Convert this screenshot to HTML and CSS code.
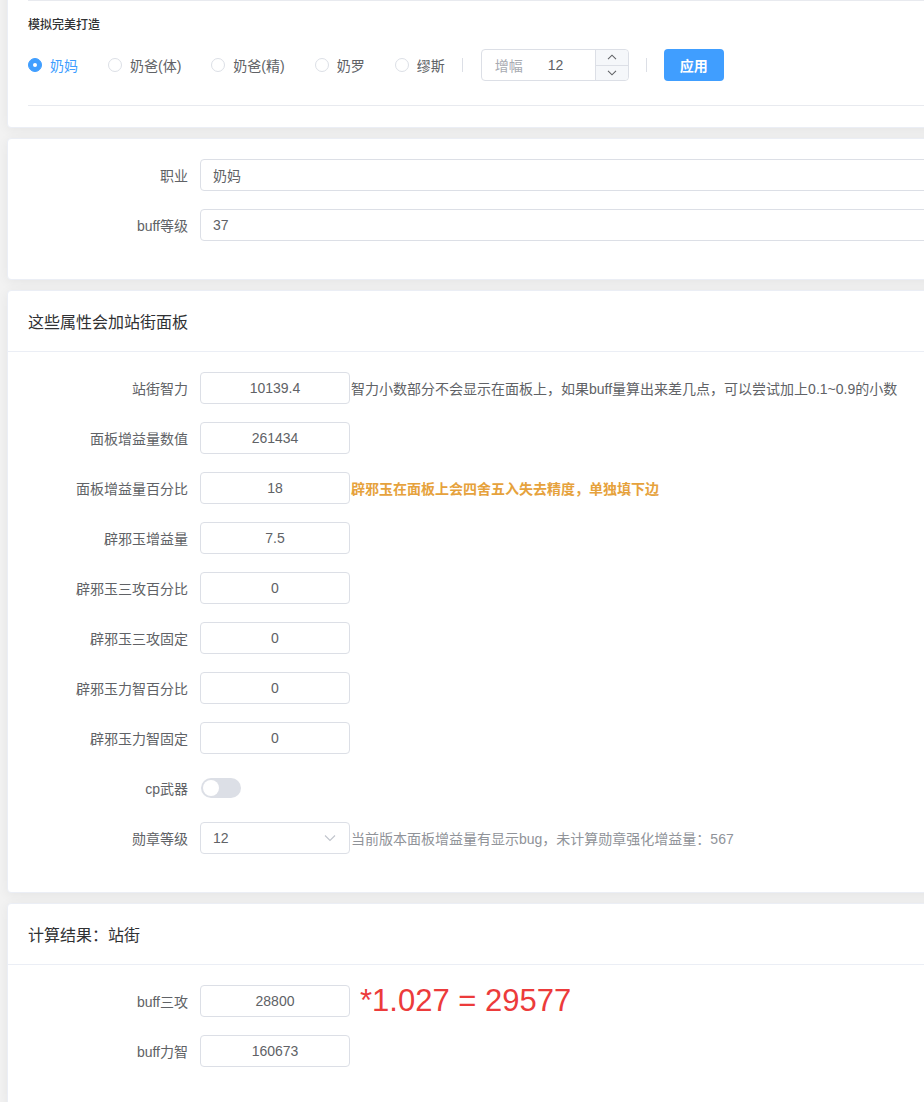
FILE: index.html
```html
<!DOCTYPE html>
<html lang="zh-CN">
<head>
<meta charset="utf-8">
<title>模拟完美打造</title>
<link rel="stylesheet" href="styles.css">
</head>
<body>
<div class="page">
  <div class="card card-top">
    <div class="card-body top-body">
      <div class="divider"></div>
      <div class="sim-title">模拟完美打造</div>
      <div class="sim-row">
        <div class="radio-group">
          <label class="radio checked"><span class="radio-dot"></span><span class="radio-text">奶妈</span></label>
          <label class="radio"><span class="radio-dot"></span><span class="radio-text">奶爸(体)</span></label>
          <label class="radio"><span class="radio-dot"></span><span class="radio-text">奶爸(精)</span></label>
          <label class="radio"><span class="radio-dot"></span><span class="radio-text">奶罗</span></label>
          <label class="radio last"><span class="radio-dot"></span><span class="radio-text">缪斯</span></label>
        </div>
        <span class="vdivider"></span>
        <div class="num-input">
          <span class="num-prefix">增幅</span>
          <span class="num-value">12</span>
          <span class="num-controls">
            <span class="num-btn num-up"><svg width="10" height="6" viewBox="0 0 10 6"><path d="M1 5.2 L5 1.2 L9 5.2" fill="none" stroke="#606266" stroke-width="1.1"/></svg></span>
            <span class="num-btn"><svg width="10" height="6" viewBox="0 0 10 6"><path d="M1 0.8 L5 4.8 L9 0.8" fill="none" stroke="#606266" stroke-width="1.1"/></svg></span>
          </span>
        </div>
        <span class="vdivider"></span>
        <button class="btn-primary">应用</button>
      </div>
      <div class="divider bottom-divider"></div>
    </div>
  </div>

  <div class="card">
    <div class="card-body">
      <div class="form-row">
        <div class="form-label">职业</div>
        <div class="input wide">奶妈</div>
      </div>
      <div class="form-row">
        <div class="form-label">buff等级</div>
        <div class="input wide">37</div>
      </div>
    </div>
  </div>

  <div class="card">
    <div class="card-header">这些属性会加站街面板</div>
    <div class="card-body">
      <div class="form-row">
        <div class="form-label">站街智力</div>
        <div class="input num">10139.4</div>
        <span class="hint">智力小数部分不会显示在面板上，如果buff量算出来差几点，可以尝试加上0.1~0.9的小数</span>
      </div>
      <div class="form-row">
        <div class="form-label">面板增益量数值</div>
        <div class="input num">261434</div>
      </div>
      <div class="form-row">
        <div class="form-label">面板增益量百分比</div>
        <div class="input num">18</div>
        <span class="hint warn">辟邪玉在面板上会四舍五入失去精度，单独填下边</span>
      </div>
      <div class="form-row">
        <div class="form-label">辟邪玉增益量</div>
        <div class="input num">7.5</div>
      </div>
      <div class="form-row">
        <div class="form-label">辟邪玉三攻百分比</div>
        <div class="input num">0</div>
      </div>
      <div class="form-row">
        <div class="form-label">辟邪玉三攻固定</div>
        <div class="input num">0</div>
      </div>
      <div class="form-row">
        <div class="form-label">辟邪玉力智百分比</div>
        <div class="input num">0</div>
      </div>
      <div class="form-row">
        <div class="form-label">辟邪玉力智固定</div>
        <div class="input num">0</div>
      </div>
      <div class="form-row">
        <div class="form-label">cp武器</div>
        <span class="switch"><span class="switch-knob"></span></span>
      </div>
      <div class="form-row">
        <div class="form-label">勋章等级</div>
        <div class="input select">
          <span>12</span>
          <svg class="select-arrow" width="12" height="8" viewBox="0 0 12 8"><path d="M1 1.5 L6 6.5 L11 1.5" fill="none" stroke="#c0c4cc" stroke-width="1.1"/></svg>
        </div>
        <span class="hint muted">当前版本面板增益量有显示bug，未计算勋章强化增益量：567</span>
      </div>
    </div>
  </div>

  <div class="card">
    <div class="card-header">计算结果：站街</div>
    <div class="card-body">
      <div class="form-row">
        <div class="form-label">buff三攻</div>
        <div class="input num">28800</div>
        <span class="result">*1.027 = 29577</span>
      </div>
      <div class="form-row">
        <div class="form-label">buff力智</div>
        <div class="input num">160673</div>
      </div>
    </div>
  </div>
</div>
</body>
</html>
```

FILE: styles.css
```css
html, body {
  margin: 0;
  padding: 0;
  overflow: hidden;
  background: #f2f2f2;
}
body {
  font-family: "Liberation Sans", "Noto Sans CJK SC", sans-serif;
  font-size: 14px;
  color: #606266;
}
.page {
  padding-left: 7px;
  width: 1100px;
  display: flex;
  flex-direction: column;
  gap: 10px;
}
.card {
  background: #fff;
  border: 1px solid #ebeef5;
  border-radius: 4px;
  box-shadow: 0 2px 12px 0 rgba(0, 0, 0, 0.06);
}
.card-top {
  margin-top: -20px;
}
.card-body {
  padding: 20px 20px 20px 20px;
}
.top-body {
  padding: 19px 20px 21px 20px;
}
.divider {
  height: 1px;
  background: #e8eaef;
}
.bottom-divider {
  margin-top: 24px;
}
.sim-title {
  margin-top: 14px;
  height: 20px;
  line-height: 20px;
  font-size: 12px;
  font-weight: 500;
  color: #303133;
}
.sim-row {
  margin-top: 14px;
  height: 32px;
  display: flex;
  align-items: center;
}
.radio-group {
  display: flex;
  align-items: center;
}
.radio {
  display: flex;
  align-items: center;
  margin-right: 30px;
  color: #606266;
  font-size: 14px;
}
.radio.last {
  margin-right: 0;
}
.radio-dot {
  width: 12px;
  height: 12px;
  border: 1px solid #dcdfe6;
  border-radius: 50%;
  background: #fff;
  margin-right: 8px;
  position: relative;
}
.radio.checked .radio-dot {
  background: #409eff;
  border-color: #409eff;
}
.radio.checked .radio-dot::after {
  content: "";
  position: absolute;
  left: 4px;
  top: 4px;
  width: 4px;
  height: 4px;
  border-radius: 50%;
  background: #fff;
}
.radio.checked .radio-text {
  color: #409eff;
}
.vdivider {
  width: 1px;
  height: 14px;
  background: #dcdfe6;
  margin: 0 18px 0 17px;
}
.num-input {
  width: 146px;
  height: 30px;
  border: 1px solid #dcdfe6;
  border-radius: 4px;
  display: flex;
  align-items: center;
  position: relative;
}
.num-prefix {
  color: #a8abb2;
  margin-left: 13px;
}
.num-value {
  color: #606266;
  margin-left: 25px;
}
.num-controls {
  position: absolute;
  right: 0;
  top: 0;
  bottom: 0;
  width: 32px;
  border-left: 1px solid #dcdfe6;
  background: #f5f7fa;
  border-radius: 0 4px 4px 0;
  display: flex;
  flex-direction: column;
}
.num-btn {
  flex: 1;
  display: flex;
  align-items: center;
  justify-content: center;
}
.num-up {
  border-bottom: 1px solid #dcdfe6;
}
.btn-primary {
  width: 60px;
  height: 32px;
  margin-left: -1px;
  border: none;
  border-radius: 4px;
  background: #409eff;
  color: #fff;
  font-family: "Liberation Sans", "Noto Sans CJK SC", sans-serif;
  font-size: 14px;
  font-weight: bold;
  padding: 0;
}
.card-header {
  height: 60px;
  padding: 0 20px;
  border-bottom: 1px solid #ebeef5;
  display: flex;
  align-items: center;
  font-size: 16px;
  color: #303133;
}
.form-row {
  display: flex;
  align-items: center;
  height: 32px;
  margin-bottom: 18px;
}
.form-label {
  width: 160px;
  padding-right: 12px;
  text-align: right;
  color: #606266;
  font-size: 14px;
  flex-shrink: 0;
}
.input {
  box-sizing: border-box;
  height: 32px;
  border: 1px solid #dcdfe6;
  border-radius: 4px;
  display: flex;
  align-items: center;
  color: #606266;
  font-size: 14px;
  background: #fff;
}
.input.wide {
  width: 900px;
  padding: 0 12px;
}
.input.num {
  width: 150px;
  justify-content: center;
}
.input.select {
  width: 150px;
  padding: 0 12px 0 12px;
  justify-content: space-between;
}
.select-arrow {
  margin-right: 1px;
}
.hint {
  margin-left: 1px;
  color: #606266;
  font-size: 14px;
  white-space: nowrap;
}
.hint.warn {
  color: #e6a23c;
  font-weight: bold;
}
.hint.muted {
  color: #909399;
}
.switch {
  width: 40px;
  height: 20px;
  border-radius: 10px;
  background: #dcdfe6;
  position: relative;
  margin-left: 1px;
}
.switch-knob {
  position: absolute;
  left: 2px;
  top: 2px;
  width: 16px;
  height: 16px;
  border-radius: 50%;
  background: #fff;
}
.result {
  margin-left: 10px;
  font-size: 31px;
  color: #ec3b3b;
  white-space: nowrap;
}
```
